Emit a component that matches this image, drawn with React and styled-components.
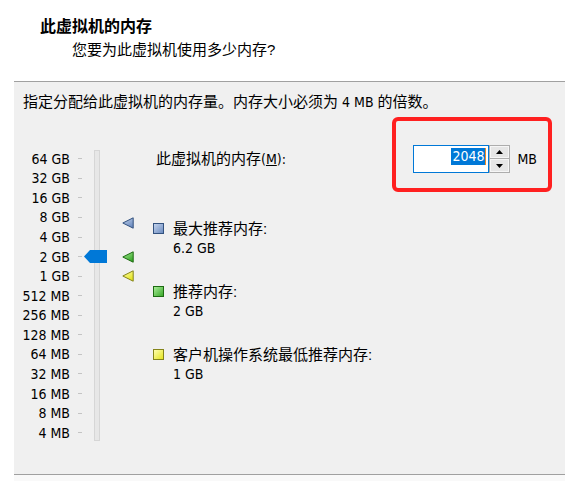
import React from 'react';
import styled, { createGlobalStyle } from 'styled-components';

const GlobalStyle = createGlobalStyle`
  html, body {
    margin: 0;
    padding: 0;
    background: #ffffff;
  }
  body {
    font-family: "Liberation Sans", "Noto Sans CJK SC", sans-serif;
    color: #000;
  }
`;

const LATIN = `"DejaVu Sans Condensed", "Liberation Sans", "Noto Sans CJK SC", sans-serif`;
const LATIN_SIZE = '14px';

const ROW = 19.57;
const TOP_PAD = 4;

const sizes = [
  '64 GB', '32 GB', '16 GB', '8 GB', '4 GB', '2 GB', '1 GB',
  '512 MB', '256 MB', '128 MB', '64 MB', '32 MB', '16 MB', '8 MB', '4 MB',
];

// slider index for a value in MB (64 GB sits on row 0)
const rowCenter = (mb) => TOP_PAD + (16 - Math.log2(mb) + 0.5) * ROW;

const palette = {
  blue: { light: '#c3d3ec', dark: '#6d8cc0', edge: '#33527f' },
  green: { light: '#a8ec98', dark: '#3aa82a', edge: '#1d6a12' },
  yellow: { light: '#ffffb0', dark: '#e4e420', edge: '#84841a' },
};

const Page = styled.div`
  width: 576px;
  height: 481px;
  display: flex;
  flex-direction: column;
  background: #fff;
  overflow: hidden;
`;

const Header = styled.div`
  height: 81px;
  padding-top: 17px;
  box-sizing: border-box;
`;

const Title = styled.div`
  padding-left: 40px;
  font-size: 16px;
  font-weight: bold;
  line-height: 20px;
`;

const Subtitle = styled.div`
  padding-left: 72px;
  margin-top: 3px;
  font-size: 15px;
  line-height: 20px;
`;

const Panel = styled.div`
  position: relative;
  margin-left: 14px;
  width: 551px;
  height: 394px;
  box-sizing: border-box;
  background: #f0f0f0;
  border-top: 1px solid #a0a0a0;
  border-bottom: 1px solid #a0a0a0;
  padding-top: 10px;
`;

const Footer = styled.div`
  margin-left: 14px;
  width: 551px;
  flex: 1;
  background: #f9f9f9;
`;

const Instruction = styled.div`
  padding-left: 9px;
  font-size: 15px;
  line-height: 20px;
`;

const Lat = styled.span`
  font-family: ${LATIN};
  font-size: ${LATIN_SIZE};
`;

const Body = styled.div`
  display: flex;
  align-items: flex-start;
  margin-top: 33px;
`;

const Slider = styled.div`
  position: relative;
  display: flex;
  padding-top: ${TOP_PAD}px;
`;

const Labels = styled.div`
  width: 56px;
  display: grid;
  grid-auto-rows: ${ROW}px;
`;

const Label = styled.div`
  font-family: ${LATIN};
  font-size: ${LATIN_SIZE};
  display: flex;
  align-items: center;
  justify-content: flex-end;
  white-space: nowrap;
`;

const Ticks = styled.div`
  width: 4px;
  margin-left: 8px;
  display: grid;
  grid-auto-rows: ${ROW}px;
`;

const Tick = styled.div`
  display: flex;
  align-items: center;
  &::before {
    content: '';
    width: 4px;
    height: 1px;
    background: #c4c4c4;
  }
`;

const Track = styled.div`
  width: 6px;
  margin-left: 12px;
  margin-top: 1px;
  height: 291px;
  box-sizing: border-box;
  border: 1px solid #d6d6d6;
  background: #e7e7e7;
`;

const Thumb = styled.svg`
  position: absolute;
  left: 70px;
`;

const Markers = styled.div`
  position: relative;
  width: 33px;
  height: 290px;
`;

const Marker = styled.svg`
  position: absolute;
  left: 22px;
`;

const Content = styled.div`
  flex: 1;
  margin-left: 20px;
  padding-right: 28px;
  display: flex;
  flex-direction: column;
`;

const MemoryRow = styled.div`
  display: flex;
  align-items: center;
  height: 28px;
`;

const MemoryLabel = styled.div`
  padding-left: 3px;
  font-size: 15px;
  line-height: 20px;
  u {
    text-decoration: underline;
  }
`;

const Spin = styled.div`
  margin-left: auto;
  display: flex;
  height: 28px;
`;

const SpinInput = styled.div`
  width: 76px;
  height: 28px;
  box-sizing: border-box;
  border: 1px solid #0078d7;
  background: #fff;
  display: flex;
  align-items: flex-start;
  justify-content: flex-end;
  padding: 2px 2px 0 0;
`;

const Selected = styled.span`
  font-family: ${LATIN};
  font-size: ${LATIN_SIZE};
  line-height: 17px;
  padding: 0 1px;
  background: #0078d7;
  color: #fff;
  border-right: 1px solid #f08a24;
`;

const SpinButtons = styled.div`
  display: flex;
  flex-direction: column;
  width: 21px;
`;

const SpinButton = styled.div`
  flex: ${(p) => (p.$down ? 14 : 13)};
  box-sizing: border-box;
  border: 1px solid #adadad;
  border-top-width: ${(p) => (p.$down ? 0 : 1)}px;
  background: #e6e6e6;
  box-shadow: inset 0 0 0 1px #f6f6f6;
  display: flex;
  align-items: center;
  justify-content: center;
`;

const Unit = styled.div`
  margin-left: 7px;
  font-family: ${LATIN};
  font-size: ${LATIN_SIZE};
`;

const Legend = styled.div`
  display: flex;
  flex-direction: column;
  gap: 24px;
  margin-top: 46px;
`;

const LegendItem = styled.div`
  display: grid;
  grid-template-columns: 11px 1fr;
  column-gap: 9px;
  font-size: 15px;
  line-height: 19.5px;
`;

const Swatch = styled.span`
  width: 11px;
  height: 11px;
  box-sizing: border-box;
  align-self: center;
  border: 1px solid ${(p) => palette[p.$color].edge};
  background: linear-gradient(
    135deg,
    ${(p) => palette[p.$color].light},
    ${(p) => palette[p.$color].dark}
  );
`;

const Value = styled.div`
  grid-column: 2;
  font-family: ${LATIN};
  font-size: ${LATIN_SIZE};
`;

const Highlight = styled.div`
  position: absolute;
  left: 378px;
  top: 35px;
  width: 160px;
  height: 75px;
  box-sizing: border-box;
  border: 4px solid #ff2020;
  border-radius: 6px;
`;

const Triangle = ({ color, top }) => {
  const c = palette[color];
  const id = `tri-${color}`;
  return (
    <Marker width="12" height="12" viewBox="0 0 12 12" style={{ top }}>
      <defs>
        <linearGradient id={id} x1="0" y1="0" x2="0.6" y2="1">
          <stop offset="0" stopColor={c.light} />
          <stop offset="1" stopColor={c.dark} />
        </linearGradient>
      </defs>
      <polygon points="0.8,6 11.2,0.8 11.2,11.2" fill={`url(#${id})`} stroke={c.edge} strokeWidth="1" strokeLinejoin="round" />
    </Marker>
  );
};

const ArrowUp = () => (
  <svg width="7" height="4" viewBox="0 0 7 4">
    <polygon points="3.5,0 7,4 0,4" fill="#000" />
  </svg>
);

const ArrowDown = () => (
  <svg width="7" height="4" viewBox="0 0 7 4">
    <polygon points="0,0 7,0 3.5,4" fill="#000" />
  </svg>
);

const legend = [
  { color: 'blue', title: '最大推荐内存:', value: '6.2 GB' },
  { color: 'green', title: '推荐内存:', value: '2 GB' },
  { color: 'yellow', title: '客户机操作系统最低推荐内存:', value: '1 GB' },
];

// the blue marker sits a little above where log2(6.2 GB) would put it
const markers = [
  { color: 'blue', mb: 6.2 * 1024, nudge: -2 },
  { color: 'green', mb: 2048, nudge: 0 },
  { color: 'yellow', mb: 1024, nudge: 0 },
];

const App = () => {
  const current = 2048;
  return (
    <Page>
      <GlobalStyle />
      <Header>
        <Title>此虚拟机的内存</Title>
        <Subtitle>您要为此虚拟机使用多少内存?</Subtitle>
      </Header>
      <Panel>
        <Instruction>
          指定分配给此虚拟机的内存量。内存大小必须为<Lat> 4 MB </Lat>的倍数。
        </Instruction>
        <Body>
          <Slider>
            <Labels>
              {sizes.map((s) => (
                <Label key={s}>{s}</Label>
              ))}
            </Labels>
            <Ticks>
              {sizes.map((s) => (
                <Tick key={s} />
              ))}
            </Ticks>
            <Track />
            <Thumb
              width="23"
              height="13"
              viewBox="0 0 23 13"
              style={{ top: rowCenter(current) - 6.5 }}
            >
              <polygon points="0,6.5 6,0 23,0 23,13 6,13" fill="#0078d7" />
            </Thumb>
          </Slider>
          <Markers>
            {markers.map((m) => (
              <Triangle key={m.color} color={m.color} top={rowCenter(m.mb) - 6 + m.nudge} />
            ))}
          </Markers>
          <Content>
            <MemoryRow>
              <MemoryLabel>
                此虚拟机的内存<Lat>(<u>M</u>):</Lat>
              </MemoryLabel>
              <Spin>
                <SpinInput>
                  <Selected>2048</Selected>
                </SpinInput>
                <SpinButtons>
                  <SpinButton>
                    <ArrowUp />
                  </SpinButton>
                  <SpinButton $down>
                    <ArrowDown />
                  </SpinButton>
                </SpinButtons>
              </Spin>
              <Unit>MB</Unit>
            </MemoryRow>
            <Legend>
              {legend.map((l) => (
                <LegendItem key={l.color}>
                  <Swatch $color={l.color} />
                  <span>{l.title}</span>
                  <Value>{l.value}</Value>
                </LegendItem>
              ))}
            </Legend>
          </Content>
        </Body>
        <Highlight />
      </Panel>
      <Footer />
    </Page>
  );
};

export default App;
